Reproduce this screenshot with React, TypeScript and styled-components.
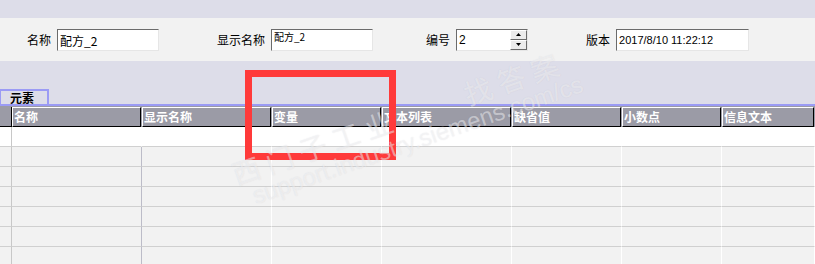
import React from "react";
import styled, { createGlobalStyle } from "styled-components";

const columns = [
  { key: "name", title: "名称", width: 130, divider: "#bcbcc8" },
  { key: "display", title: "显示名称", width: 130, divider: "#ffffff" },
  { key: "tag", title: "变量", width: 110, divider: "#ffffff" },
  { key: "textList", title: "文本列表", width: 130, divider: "#ffffff" },
  { key: "default", title: "缺省值", width: 110, divider: "#ffffff" },
  { key: "decimals", title: "小数点", width: 100, divider: "#ffffff" },
  { key: "info", title: "信息文本", width: 93, divider: "#ffffff" },
];

const rowCount = 7;

const GlobalStyle = createGlobalStyle`
  html, body {
    margin: 0;
    padding: 0;
    background: #dddde9;
    font-family: "Noto Sans CJK SC", "Liberation Sans", sans-serif;
    font-size: 12px;
    overflow: hidden;
  }
`;

export default function App() {
  return (
    <>
      <GlobalStyle />
      <Page>
        <TopStrip />
        <FormBand>
          <Field $offset={27}>
            <Label>名称</Label>
            <TextBox $width={102}>配方_2</TextBox>
          </Field>
          <Field $offset={58}>
            <Label>显示名称</Label>
            <TextBox $width={102} $small>配方_2</TextBox>
          </Field>
          <Field $offset={53}>
            <Label>编号</Label>
            <SpinBox>
              <SpinValue>2</SpinValue>
              <SpinButtons>
                <SpinButton>
                  <svg width="5" height="3" viewBox="0 0 5 3">
                    <path d="M0 3 L2.5 0 L5 3 Z" fill="#000" />
                  </svg>
                </SpinButton>
                <SpinButton>
                  <svg width="5" height="3" viewBox="0 0 5 3">
                    <path d="M0 0 L2.5 3 L5 0 Z" fill="#000" />
                  </svg>
                </SpinButton>
              </SpinButtons>
            </SpinBox>
          </Field>
          <Field $offset={58}>
            <Label>版本</Label>
            <TextBox $width={133} $latin>2017/8/10 11:22:12</TextBox>
          </Field>
        </FormBand>

        <TabBar>
          <Tab>元素</Tab>
        </TabBar>

        <Grid>
          <HeaderRow>
            <CornerCell />
            {columns.map((c) => (
              <HeaderCell key={c.key} $width={c.width}>
                {c.title}
              </HeaderCell>
            ))}
          </HeaderRow>
          {Array.from({ length: rowCount }).map((_, i) => (
            <BodyRow key={i} $first={i === 0}>
              <RowHead />
              {columns.map((c) => (
                <BodyCell key={c.key} $width={c.width} $divider={i === 0 ? "transparent" : c.divider} />
              ))}
            </BodyRow>
          ))}
        </Grid>

        {/* 截图上的标注框和水印 */}
        <Highlight />
        <Watermark>
          <WatermarkTitle>西门子工业　　找答案</WatermarkTitle>
          <WatermarkUrl>support.industry.siemens.com/cs</WatermarkUrl>
        </Watermark>
      </Page>
    </>
  );
}

const Page = styled.div`
  position: relative;
  width: 815px;
  height: 264px;
  overflow: hidden;
  background: #dddde9;
`;

const TopStrip = styled.div`
  height: 18px;
`;

const FormBand = styled.div`
  height: 43px;
  background: #f2f2f2;
  display: flex;
  align-items: center;
`;

const Field = styled.div<{ $offset: number }>`
  display: flex;
  align-items: center;
  gap: 6px;
  margin-left: ${(p) => p.$offset}px;
`;

const Label = styled.span`
  color: #000;
  font-size: 12px;
  line-height: 14px;
`;

const TextBox = styled.div<{ $width: number; $small?: boolean; $latin?: boolean }>`
  box-sizing: border-box;
  width: ${(p) => p.$width}px;
  height: 22px;
  background: #fff;
  border-top: 1px solid #6b6b6b;
  border-left: 1px solid #6b6b6b;
  border-right: 1px solid #e6e6e6;
  border-bottom: 1px solid #e6e6e6;
  padding: ${(p) => (p.$small ? "1px 0 0 2px" : "3px 0 0 2px")};
  font-family: ${(p) =>
    p.$latin ? `"Liberation Sans", sans-serif` : `"Noto Sans CJK SC", sans-serif`};
  font-size: ${(p) => (p.$small ? "10px" : p.$latin ? "11px" : "12px")};
  line-height: ${(p) => (p.$small ? "12px" : "15px")};
  color: #000;
  white-space: nowrap;
`;

const SpinBox = styled.div`
  box-sizing: border-box;
  width: 72px;
  height: 22px;
  background: #fff;
  border-top: 1px solid #6b6b6b;
  border-left: 1px solid #6b6b6b;
  border-right: 1px solid #e6e6e6;
  border-bottom: 1px solid #e6e6e6;
  display: flex;
`;

const SpinValue = styled.div`
  flex: 1;
  padding: 3px 0 0 2px;
  font-family: "Liberation Sans", sans-serif;
  font-size: 12px;
  line-height: 15px;
`;

const SpinButtons = styled.div`
  width: 17px;
  display: flex;
  flex-direction: column;
`;

const SpinButton = styled.div`
  box-sizing: border-box;
  flex: 1;
  display: flex;
  align-items: center;
  justify-content: center;
  background: #ececec;
  border-top: 1px solid #fff;
  border-left: 1px solid #fff;
  border-right: 1px solid #6b6b6b;
  border-bottom: 1px solid #6b6b6b;
`;

const TabBar = styled.div`
  margin-top: 28px;
  height: 15px;
  border-bottom: 2px solid #9b9bf5;
  display: flex;
`;

const Tab = styled.div`
  box-sizing: border-box;
  width: 49px;
  height: 15px;
  border-top: 2px solid #9b9bf5;
  border-right: 2px solid #9b9bf5;
  border-left: 1px solid #9b9bf5;
  padding-left: 9px;
  font-weight: 700;
  font-size: 12px;
  line-height: 13px;
  color: #000;
`;

const Grid = styled.div`
  display: flex;
  flex-direction: column;
`;

const HeaderRow = styled.div`
  display: flex;
  height: 21px;
  padding-top: 1px;
  box-sizing: border-box;
  background: #9b9ba6;
`;

const CornerCell = styled.div`
  box-sizing: border-box;
  width: 12px;
  height: 20px;
  border-right: 1px solid #000;
  border-bottom: 1px solid #000;
`;

const HeaderCell = styled.div<{ $width: number }>`
  box-sizing: border-box;
  flex: 0 0 ${(p) => p.$width}px;
  height: 20px;
  margin-right: 1px;
  max-width: ${(p) => p.$width - 1}px;
  border-top: 1px solid #fff;
  border-left: 1px solid #fff;
  border-right: 1px solid #000;
  border-bottom: 1px solid #000;
  padding-left: 1px;
  color: #fff;
  font-weight: 700;
  font-size: 12px;
  line-height: 17px;
  white-space: nowrap;
  overflow: hidden;
`;

const BodyRow = styled.div<{ $first: boolean }>`
  display: flex;
  height: 20px;
  background: ${(p) => (p.$first ? "#fff" : "#f2f2f2")};
`;

const RowHead = styled.div`
  box-sizing: border-box;
  width: 12px;
  border-right: 1px solid #c8c8c8;
  border-bottom: 1px solid #d0d0d0;
`;

const BodyCell = styled.div<{ $width: number; $divider: string }>`
  box-sizing: border-box;
  flex: 0 0 ${(p) => p.$width}px;
  border-bottom: 1px solid #d0d0d0;
  border-right: 1px solid ${(p) => p.$divider};
`;

const Highlight = styled.div`
  position: absolute;
  left: 245px;
  top: 70px;
  width: 151px;
  height: 90px;
  box-sizing: border-box;
  border: 7px solid #ff3a3a;
  pointer-events: none;
`;

const Watermark = styled.div`
  position: absolute;
  left: 228px;
  top: 160px;
  transform: rotate(-19deg);
  transform-origin: left top;
  pointer-events: none;
  color: rgba(255, 255, 255, 0.45);
  text-shadow: 0 0 1px rgba(120, 120, 140, 0.18);
  white-space: nowrap;
`;

const WatermarkTitle = styled.div`
  font-family: "Noto Sans CJK SC", sans-serif;
  font-size: 28px;
  font-weight: 400;
  line-height: 30px;
  letter-spacing: 7px;
`;

const WatermarkUrl = styled.div`
  font-family: "Liberation Sans", sans-serif;
  font-size: 24px;
  line-height: 26px;
  margin-left: 12px;
`;
